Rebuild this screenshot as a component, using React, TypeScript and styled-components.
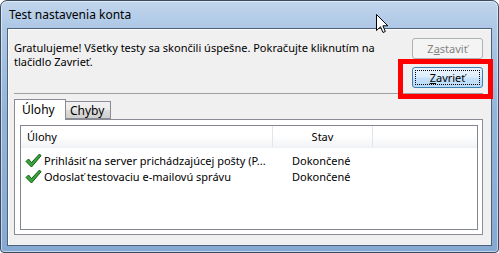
import React from 'react'
import styled, { createGlobalStyle } from 'styled-components'

const GlobalStyle = createGlobalStyle`
  html, body {
    margin: 0;
    padding: 0;
    background: #ffffff;
  }

  body {
    font-family: 'Noto Sans', 'Liberation Sans', sans-serif;
    font-size: 11px;
    color: #000000;
  }

  * {
    box-sizing: border-box;
  }
`

const Window = styled.div`
  position: relative;
  width: 499px;
  height: 253px;
  display: flex;
  flex-direction: column;
  padding: 0 6px 6px 6px;
  border: 1px solid #3b4c60;
  border-radius: 7px 7px 4px 4px;
  background: linear-gradient(180deg, #c2d6ec 0%, #aec8e6 10%, #93b4da 45%, #86a9d3 100%);
  box-shadow: inset 0 0 0 1px rgba(255, 255, 255, 0.5);
  overflow: hidden;
`

const TitleBar = styled.div`
  height: 27px;
  flex-shrink: 0;
  display: flex;
  align-items: center;
  padding-left: 2px;
  font-size: 12px;
  color: #000000;
`

const Client = styled.div`
  flex: 1;
  display: flex;
  flex-direction: column;
  background: #f0f0f0;
  border: 1px solid #4f6176;
  box-shadow: inset 1px 1px 0 #fdfdfd;
`

const TopRow = styled.div`
  height: 64px;
  display: flex;
  justify-content: space-between;
`

const Message = styled.div`
  padding: 12px 0 0 6px;
  line-height: 14px;
`

const ButtonColumn = styled.div`
  width: 71px;
  margin-right: 8px;
  padding-top: 9px;
  display: flex;
  flex-direction: column;
  gap: 8px;
`

const Button = styled.div<{ $primary?: boolean; $disabled?: boolean }>`
  height: 21px;
  display: flex;
  padding: 2px;
  border-radius: 3px;
  border: 1px solid ${(p) => (p.$primary ? '#3c7fb1' : '#adb2b5')};
  background: ${(p) =>
    p.$primary
      ? 'linear-gradient(180deg, #eaf4fc 0%, #dcedfc 48%, #c7e2fb 52%, #b8dbf8 100%)'
      : '#f4f4f4'};
  color: ${(p) => (p.$disabled ? '#838383' : '#000000')};
`

const ButtonLabel = styled.span<{ $focused?: boolean }>`
  flex: 1;
  display: flex;
  align-items: center;
  justify-content: center;
  border: 1px dotted ${(p) => (p.$focused ? '#000000' : 'transparent')};
  line-height: 1;
`

const Separator = styled.div`
  height: 1px;
  margin: 0 8px 0 6px;
  background: #a0a0a0;
`

const TabStrip = styled.div`
  margin: 4px 0 0 6px;
  height: 21px;
  display: flex;
  align-items: flex-end;
  position: relative;
  z-index: 1;
`

const Tab = styled.div<{ $active?: boolean }>`
  height: ${(p) => (p.$active ? '21px' : '18px')};
  width: ${(p) => (p.$active ? '52px' : '45px')};
  margin-bottom: ${(p) => (p.$active ? '-1px' : '0')};
  display: flex;
  align-items: center;
  padding-left: ${(p) => (p.$active ? '7px' : '4px')};
  border: 1px solid #898c95;
  border-left: ${(p) => (p.$active ? '1px solid #898c95' : 'none')};
  border-bottom: ${(p) => (p.$active ? 'none' : '1px solid #898c95')};
  background: ${(p) =>
    p.$active ? '#ffffff' : 'linear-gradient(180deg, #f2f2f2 0%, #ebebeb 50%, #dddddd 51%, #cfcfcf 100%)'};
  font-size: 12px;
  padding-bottom: ${(p) => (p.$active ? '2px' : '0')};
`

const Panel = styled.div`
  flex: 1;
  display: flex;
  margin: 0 8px 10px 6px;
  padding: 5px 4px 4px 5px;
  background: #ffffff;
  border: 1px solid #898c95;
`

const List = styled.div`
  flex: 1;
  display: flex;
  flex-direction: column;
  border: 1px solid #828790;
  background: #ffffff;
`

const Header = styled.div`
  height: 22px;
  display: grid;
  grid-template-columns: 252px 100px 1fr;
  background: linear-gradient(180deg, #ffffff 0%, #ffffff 45%, #f3f4f6 100%);
  border-bottom: 1px solid #eef0f3;
`

const HeaderCell = styled.div<{ $center?: boolean }>`
  display: flex;
  align-items: center;
  justify-content: ${(p) => (p.$center ? 'center' : 'flex-start')};
  padding-left: ${(p) => (p.$center ? '0' : '6px')};
  border-right: 1px solid #e3e5ea;
`

const Rows = styled.div`
  padding-top: 4px;
  display: flex;
  flex-direction: column;
`

const Row = styled.div`
  height: 16px;
  display: grid;
  grid-template-columns: 252px 100px 1fr;
  align-items: center;
`

const TaskCell = styled.div`
  display: flex;
  align-items: center;
  gap: 2px;
  padding-left: 4px;
  white-space: nowrap;
  overflow: hidden;
`

const StatusCell = styled.div`
  padding-left: 19px;
  white-space: nowrap;
`

const Highlight = styled.div`
  position: absolute;
  left: 397px;
  top: 58px;
  width: 95px;
  height: 40px;
  border: 5px solid #ff0000;
`

const Cursor = styled.svg`
  position: absolute;
  left: 375px;
  top: 13px;
`

const Check = () => (
  <svg width="17" height="15" viewBox="0 0 17 15">
    <path d="M1 8.5 L3.5 6 L6.5 9.5 L14.5 1 L16 2.8 L6.5 14 Z" fill="#3aa33a" stroke="#0e5a12" strokeWidth="1" strokeLinejoin="round" />
  </svg>
)

const tasks = [
  { name: 'Prihlásiť na server prichádzajúcej pošty (P...', status: 'Dokončené' },
  { name: 'Odoslať testovaciu e-mailovú správu', status: 'Dokončené' },
]

export default function App() {
  return (
    <>
      <GlobalStyle />
      <Window>
        <TitleBar>Test nastavenia konta</TitleBar>
        <Client>
          <TopRow>
            <Message>
              Gratulujeme! Všetky testy sa skončili úspešne. Pokračujte kliknutím na
              <br />
              tlačidlo Zavrieť.
            </Message>
            <ButtonColumn>
              <Button $disabled>
                <ButtonLabel>
                  Z<u>a</u>staviť
                </ButtonLabel>
              </Button>
              <Button $primary>
                <ButtonLabel $focused>
                  <u>Z</u>avrieť
                </ButtonLabel>
              </Button>
            </ButtonColumn>
          </TopRow>
          <Separator />
          <TabStrip>
            <Tab $active>Úlohy</Tab>
            <Tab>Chyby</Tab>
          </TabStrip>
          <Panel>
            <List>
              <Header>
                <HeaderCell>Úlohy</HeaderCell>
                <HeaderCell $center>Stav</HeaderCell>
                <div />
              </Header>
              <Rows>
                {tasks.map((t) => (
                  <Row key={t.name}>
                    <TaskCell>
                      <Check />
                      {t.name}
                    </TaskCell>
                    <StatusCell>{t.status}</StatusCell>
                    <div />
                  </Row>
                ))}
              </Rows>
            </List>
          </Panel>
        </Client>
        <Highlight />
        <Cursor width="13" height="20" viewBox="0 0 13 20">
          <path d="M0.5 0.5 L0.5 16.5 L4.5 12.8 L7 18.5 L9.3 17.5 L6.9 11.8 L11.8 11.8 Z" fill="#ffffff" stroke="#000000" strokeWidth="1" strokeLinejoin="miter" />
        </Cursor>
      </Window>
    </>
  )
}
